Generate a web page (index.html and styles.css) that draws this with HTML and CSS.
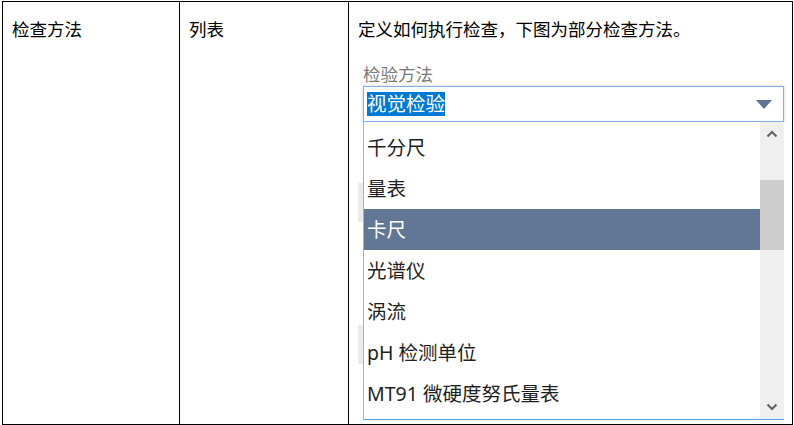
FILE: index.html
```html
<!DOCTYPE html>
<html lang="zh-CN">
<head>
    <meta charset="UTF-8">
    <meta name="viewport" content="width=device-width, initial-scale=1.0">
    <title>检查方法</title>
    <link rel="stylesheet" href="styles.css">
</head>
<body>
    <table class="spec">
        <tr>
            <td class="col-name">检查方法</td>
            <td class="col-type">列表</td>
            <td class="col-desc">
                <p class="desc">定义如何执行检查，下图为部分检查方法。</p>

                <div class="picker">
                    <span class="strip strip-a"></span>
                    <span class="strip strip-b"></span>

                    <div class="picker-label">检验方法</div>
                    <div class="picker-box">
                        <span class="picker-value">视觉检验</span>
                        <svg class="picker-arrow" width="18" height="10" viewBox="0 0 18 10">
                            <path d="M1 1 L17 1 L10 9 Q9 10 8 9 Z" fill="#5f7595"/>
                        </svg>
                    </div>

                    <div class="picker-list">
                        <ul class="options">
                            <li>千分尺</li>
                            <li>量表</li>
                            <li class="active">卡尺</li>
                            <li>光谱仪</li>
                            <li>涡流</li>
                            <li>pH 检测单位</li>
                            <li>MT91 微硬度努氏量表</li>
                        </ul>
                        <div class="scrollbar">
                            <svg class="chev" width="12" height="8" viewBox="0 0 12 8">
                                <path d="M1.5 6.5 L6 2 L10.5 6.5" fill="none" stroke="#606060" stroke-width="2"/>
                            </svg>
                            <div class="thumb"></div>
                            <svg class="chev chev-down" width="12" height="8" viewBox="0 0 12 8">
                                <path d="M1.5 1.5 L6 6 L10.5 1.5" fill="none" stroke="#606060" stroke-width="2"/>
                            </svg>
                        </div>
                    </div>
                </div>
            </td>
        </tr>
    </table>
</body>
</html>
```

FILE: styles.css
```css
body{
    margin: 0;
    padding: 1px 0 0 2px;
    background: #fff;
    font-family: "Noto Sans", "Noto Sans CJK SC", sans-serif;
    color: #000;
}

.spec{
    border-collapse: collapse;
    width: 791px;
    table-layout: fixed;
}

.spec td{
    border: 1px solid #000;
    vertical-align: top;
    height: 423px;
    padding: 15px 9px 0;
    font-size: 17.5px;
    line-height: 24px;
    box-sizing: border-box;
}

.col-name{
    width: 177px;
}

.col-type{
    width: 169px;
}

.desc{
    margin: 0;
}

/* 下拉框示意 */
.picker{
    position: relative;
    margin: 22px 0 0 5px;
    width: 421px;
}

.strip{
    position: absolute;
    left: -5px;
    width: 5px;
    height: 39px;
    background: #ebebeb;
}

.strip-a{
    top: 120px;
}

.strip-b{
    top: 262px;
}

.picker-label{
    color: #7a7a7a;
    font-size: 17.5px;
    line-height: 22px;
    margin-bottom: 1px;
}

.picker-box{
    display: flex;
    align-items: center;
    justify-content: space-between;
    height: 36px;
    box-sizing: border-box;
    border: 1px solid #7db2ea;
    box-shadow: 0 0 3px rgba(0, 0, 0, 0.2);
    padding: 0 10px 0 3px;
    background: #fff;
}

.picker-value{
    background: #0078d7;
    color: #fff;
    font-size: 19.5px;
    line-height: 24px;
}

.picker-list{
    display: flex;
    height: 297px;
    border-left: 1px solid #8cb8e8;
    border-bottom: 1px solid #5c9de2;
    background: #fff;
}

.options{
    list-style: none;
    margin: 0;
    padding: 5px 0 0;
    flex: 1;
}

.options li{
    height: 41px;
    line-height: 41px;
    padding-left: 3px;
    font-size: 19.5px;
    color: #1e1e1e;
}

.options li.active{
    background: #627796;
    color: #fff;
}

.scrollbar{
    width: 24px;
    background: #efefef;
    display: flex;
    flex-direction: column;
    align-items: center;
}

.chev{
    margin-top: 8px;
    flex: none;
}

.thumb{
    width: 24px;
    height: 70px;
    margin-top: 42px;
    background: #cdcdcd;
}

.chev-down{
    margin-top: auto;
    margin-bottom: 8px;
}
```
